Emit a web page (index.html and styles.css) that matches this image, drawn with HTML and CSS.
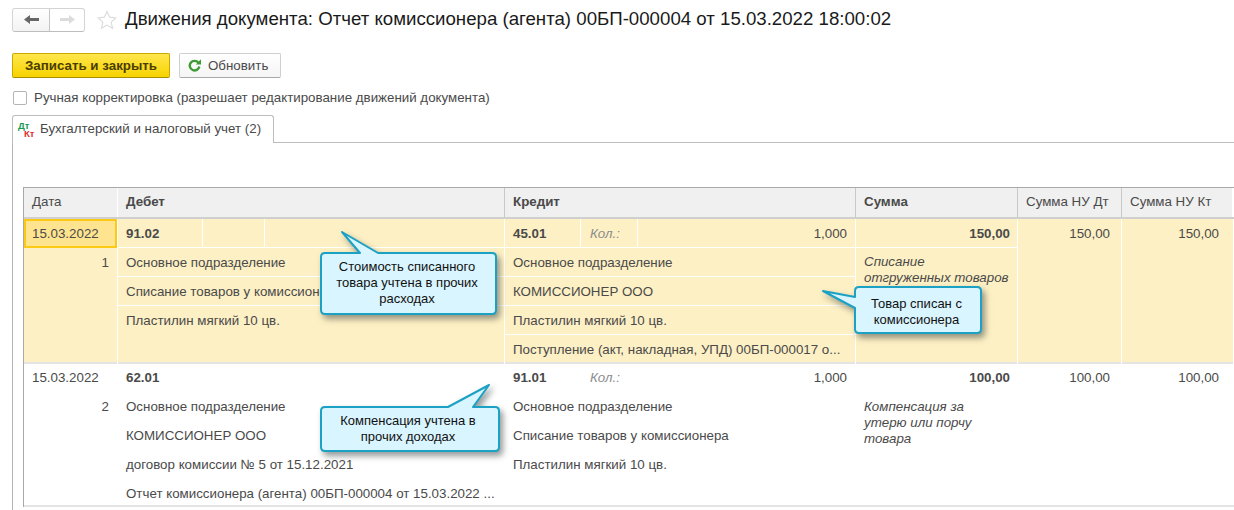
FILE: index.html
```html
<!DOCTYPE html>
<html lang="ru">
<head>
<meta charset="utf-8">
<title>Движения документа</title>
<link rel="stylesheet" href="styles.css">
</head>
<body>
<div class="page">
  <header class="head">
    <div class="nav">
      <button class="nav-btn nav-back"><svg width="15" height="9" viewBox="0 0 15 9"><path d="M0 4.500 6 0v3h9v3H6v3z" fill="#666"/></svg></button>
      <button class="nav-btn nav-fwd"><svg width="15" height="9" viewBox="0 0 15 9"><path d="M15 4.500 9 0v3H0v3h9v3z" fill="#dcdcdc"/></svg></button>
    </div>
    <svg class="star" width="20" height="20" viewBox="0 0 20 20"><path d="M10 1.500l2.600 5.700 6.200.7-4.600 4.200 1.300 6.100L10 15.100l-5.500 3.100 1.300-6.100L1.200 7.900l6.200-.7z" fill="#fff" stroke="#dcdcdc" stroke-width="1.200"/></svg>
    <h1 class="title">Движения документа: Отчет комиссионера (агента) 00БП-000004 от 15.03.2022 18:00:02</h1>
  </header>

  <div class="actions">
    <button class="btn btn-primary">Записать и закрыть</button>
    <button class="btn btn-plain"><svg width="13" height="13" viewBox="0 0 13 13"><path d="M10.300 3.600A4.800 4.800 0 1 0 11.300 7.500" fill="none" stroke="#3c9b32" stroke-width="2.400"/><path d="M7.800 5.400H13V.2z" fill="#3c9b32"/></svg>Обновить</button>
  </div>

  <label class="check"><span class="box"></span><span class="check-text">Ручная корректировка (разрешает редактирование движений документа)</span></label>

  <div class="tabs">
    <div class="tab"><span class="dk"><span class="dt">Дт</span><span class="kt">Кт</span></span>Бухгалтерский и налоговый учет (2)</div>
    <div class="tab-rest"></div>
  </div>

  <div class="panel">
    <div class="table">
      <div class="row hdr">
        <div class="c c-date">Дата</div>
        <div class="c c-deb b">Дебет</div>
        <div class="c c-cre b">Кредит</div>
        <div class="c c-sum b">Сумма</div>
        <div class="c c-nd">Сумма НУ Дт</div>
        <div class="c c-nk">Сумма НУ Кт</div>
      </div>

      <div class="row rec rec-sel">
        <div class="col c-date">
          <div class="ln date sel-date">15.03.2022</div>
          <div class="ln num">1</div>
        </div>
        <div class="col c-deb">
          <div class="ln split"><span class="s s1 b">91.02</span><span class="s s2"></span><span class="s s3"></span></div>
          <div class="ln">Основное подразделение</div>
          <div class="ln">Списание товаров у комиссионера</div>
          <div class="ln last">Пластилин мягкий 10 цв.</div>
        </div>
        <div class="col c-cre">
          <div class="ln split"><span class="s k1 b">45.01</span><span class="s k2">Кол.:</span><span class="s k3">1,000</span></div>
          <div class="ln">Основное подразделение</div>
          <div class="ln">КОМИССИОНЕР ООО</div>
          <div class="ln">Пластилин мягкий 10 цв.</div>
          <div class="ln last">Поступление (акт, накладная, УПД) 00БП-000017 о...</div>
        </div>
        <div class="col c-sum">
          <div class="ln right b">150,00</div>
          <div class="note">Списание<br>отгруженных товаров</div>
        </div>
        <div class="col c-nd"><div class="ln right">150,00</div></div>
        <div class="col c-nk"><div class="ln right">150,00</div></div>
      </div>

      <div class="row rec">
        <div class="col c-date">
          <div class="ln date">15.03.2022</div>
          <div class="ln num">2</div>
        </div>
        <div class="col c-deb">
          <div class="ln b">62.01</div>
          <div class="ln">Основное подразделение</div>
          <div class="ln">КОМИССИОНЕР ООО</div>
          <div class="ln">договор комиссии № 5 от 15.12.2021</div>
          <div class="ln last">Отчет комиссионера (агента) 00БП-000004 от 15.03.2022 ...</div>
        </div>
        <div class="col c-cre">
          <div class="ln split"><span class="s k1 b">91.01</span><span class="s k2">Кол.:</span><span class="s k3">1,000</span></div>
          <div class="ln">Основное подразделение</div>
          <div class="ln">Списание товаров у комиссионера</div>
          <div class="ln">Пластилин мягкий 10 цв.</div>
        </div>
        <div class="col c-sum">
          <div class="ln right b">100,00</div>
          <div class="note">Компенсация за<br>утерю или порчу<br>товара</div>
        </div>
        <div class="col c-nd"><div class="ln right">100,00</div></div>
        <div class="col c-nk"><div class="ln right">100,00</div></div>
      </div>
    </div>
  </div>

  <div class="callout co1">
    <svg width="177" height="83" viewBox="0 0 177 83"><path class="shape" d="M5 22h35L22 1l36 21h114q4 0 4 4v53q0 4-4 4H5q-4 0-4-4V26q0-4 4-4z"/></svg>
    <p class="ctext">Стоимость списанного<br>товара учтена в прочих<br>расходах</p>
  </div>
  <div class="callout co2">
    <svg width="159" height="48" viewBox="0 0 159 48"><path class="shape" d="M37 1h118q4 0 4 4v38q0 4-4 4H37q-4 0-4-4V22L1 5l32 6V5q0-4 4-4z"/></svg>
    <p class="ctext">Товар списан с<br>комиссионера</p>
  </div>
  <div class="callout co3">
    <svg width="180" height="68" viewBox="0 0 180 68"><path class="shape" d="M5 23h123L169 1l-16 22h22q4 0 4 4v36q0 4-4 4H5q-4 0-4-4V27q0-4 4-4z"/></svg>
    <p class="ctext">Компенсация учтена в<br>прочих доходах</p>
  </div>
</div>
</body>
</html>
```
FILE: styles.css
```css
* { box-sizing: border-box; }
html, body { margin: 0; height: 510px; overflow: hidden; background: #fff; }
body { font: 13.33px "Liberation Sans", Arial, sans-serif; color: #4a4a4a; }
.page { position: relative; width: 1234px; height: 510px; overflow: hidden; padding: 8px 0 0 12px; }

.head { display: flex; align-items: center; height: 23px; }
.nav { display: flex; width: 73px; height: 24px; border: 1px solid #d4d4d4; border-bottom-color: #bdbdbd; border-radius: 3px; }
.nav-btn { display: flex; align-items: center; justify-content: center; flex: none; height: 100%; padding: 0; border: 0; background: #fff; }
.nav-back { width: 37px; border-right: 1px solid #c4c4c4; background: linear-gradient(#fff, #f2f2f2); border-radius: 3px 0 0 3px; }
.nav-fwd { width: 34px; border-radius: 0 3px 3px 0; }
.star { margin-left: 12px; flex: none; }
.title { margin: 0 0 2px 8px; font-size: 18.67px; font-weight: 400; color: #1a1a1a; white-space: nowrap; }

.actions { display: flex; gap: 9px; margin-top: 22px; height: 25px; }
.btn { display: flex; align-items: center; justify-content: center; height: 25px; padding: 0; font: 13.33px "Liberation Sans", Arial, sans-serif; border-radius: 2px; }
.btn-primary { width: 158px; font-weight: 700; color: #4a3d00; background: linear-gradient(#ffe64d, #f7d300); border: 1px solid #c9a900; border-bottom-color: #a98e00; }
.btn-plain { width: 102px; justify-content: flex-start; gap: 7px; padding-left: 8px; color: #4a4a4a; background: linear-gradient(#fff, #f5f5f5); border: 1px solid #cfcfcf; border-bottom-color: #a8a8a8; }

.check { display: flex; align-items: center; gap: 7px; height: 16px; margin: 12px 0 0 1px; }
.check-text { margin-bottom: 2px; }
.box { width: 14px; height: 14px; border: 1px solid #b5b5b5; border-radius: 2px; background: #fff; }

.tabs { display: flex; height: 28px; margin-top: 9px; }
.tab { display: flex; align-items: flex-start; width: 262px; height: 28px; padding: 5px 0 0 6px; border: 1px solid #bdbdbd; border-bottom: 0; border-radius: 3px 3px 0 0; background: #fff; white-space: nowrap; }
.tab-rest { flex: 1; border-bottom: 1px solid #bdbdbd; }
.dk { position: relative; width: 21px; height: 16px; flex: none; font-size: 9.500px; font-weight: 700; line-height: 8px; }
.dt { position: absolute; left: -1px; top: 1px; color: #1a9a50; }
.kt { position: absolute; left: 5px; top: 9px; color: #e03030; }

.panel { height: 368px; padding: 44px 0 0 10px; border-left: 1px solid #b5b5b5; }
.table { width: 1211px; border-left: 1px solid #a8a8a8; border-top: 1px solid #a8a8a8; }
.row { display: grid; grid-template-columns: 94px 387px 351px 162px 104px 1fr; }
.hdr { height: 31px; background: #f0f0f0; border-bottom: 2px solid #cfcfcf; }
.hdr .c { display: flex; align-items: center; padding: 0 0 2px 8px; border-right: 2px solid #fff; }
.hdr .c-deb, .hdr .c-cre, .hdr .c-sum, .hdr .c-nd { border-right: 1px solid #c8c8c8; }
.hdr .c-date { border-right: 1px solid #fff; }
.b { font-weight: 700; }

.rec { border-bottom: 2px solid #e4e4e4; }
.rec-sel { height: 145px; background: #fdf0c4; }
.rec:not(.rec-sel) { height: 143px; }
.col { min-width: 0; border-right: 1px solid transparent; }
.rec-sel .col { border-right-color: #fff; }

.ln { height: 29px; padding: 6px 8px 0 8px; line-height: 15px; white-space: nowrap; overflow: hidden; }
.rec-sel .ln { padding-top: 7px; border-bottom: 1px solid #fff; }
.rec-sel .c-date .ln.num, .rec-sel .ln.last, .rec-sel .c-nd .ln, .rec-sel .c-nk .ln { border-bottom: 0; }
.rec-sel .sel-date { background: #ffe48f; border: 2px solid #fcc914; padding: 5px 0 0 6px; }
.num { text-align: right; }
.right { text-align: right; }
.c-sum .right { padding-right: 7px; }
.c-nd .right { padding-right: 11px; }
.c-nk .right { padding-right: 14px; }
.ln.split { display: flex; padding: 0; }
.s { display: block; height: 100%; padding: 6px 0 0 9px; }
.rec-sel .s { padding-top: 7px; border-right: 1px solid #fff; }
.rec-sel .s:last-child { border-right: 0; }
.s1 { width: 85px; padding-left: 8px; }
.rec-sel .s1 { padding-left: 8px; }
.s2 { width: 62px; }
.k1 { width: 76px; padding-left: 8px; }
.k2 { width: 57px; font-style: italic; color: #8c8c8c; }
.k3 { flex: 1; padding-right: 8px; text-align: right; }
.note { padding: 6px 8px 0 8px; font-style: italic; line-height: 16px; }

.callout { position: absolute; }
.callout svg { position: absolute; left: 0; top: 0; overflow: visible; filter: drop-shadow(3px 4px 3px rgba(60, 70, 70, .55)); }
.shape { fill: #d9f5ff; stroke: #1ba1c4; stroke-width: 2; stroke-linejoin: round; }
.ctext { position: relative; margin: 0; font-size: 13px; line-height: 16px; color: #111; text-align: center; }
.co1 { left: 320px; top: 231px; width: 177px; height: 83px; }
.co1 .ctext { padding: 28px 3px 0 0; }
.co2 { left: 822px; top: 286px; width: 159px; height: 48px; }
.co2 .ctext { padding: 10px 3px 0 33px; }
.co3 { left: 320px; top: 384px; width: 180px; height: 68px; }
.co3 .ctext { padding: 29px 4px 0 0; }
```
